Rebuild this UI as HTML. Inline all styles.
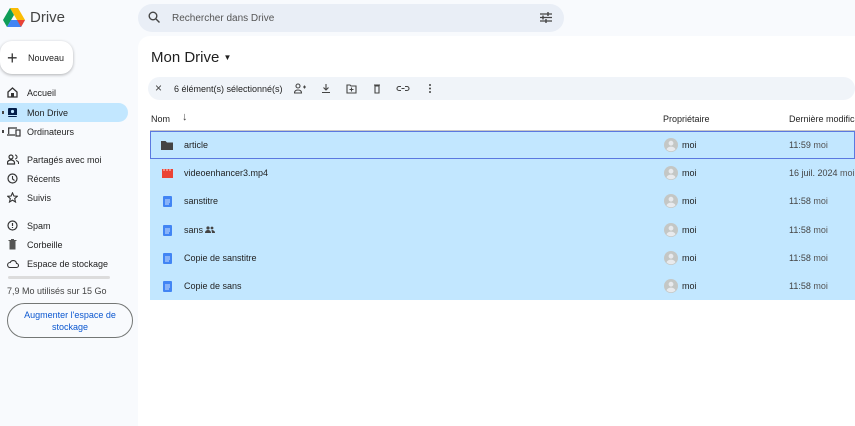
<!DOCTYPE html>
<html><head><meta charset="utf-8"><style>
*{box-sizing:border-box;margin:0;padding:0}
body{width:855px;height:426px;overflow:hidden;background:#f8fafd;font-family:"Liberation Sans",sans-serif;color:#1f1f1f;position:relative}
.a{position:absolute}
.t{font-size:9px;color:#1f1f1f;white-space:nowrap}
.nav{position:absolute;left:0;width:128px;height:19px;display:flex;align-items:center;font-size:9px}
.nav svg{position:absolute;left:7px}
.nav span{position:absolute;left:27px}
.row{position:absolute;left:150px;width:705px;height:29px;background:#c2e7ff;font-size:9px}
.row>span{position:absolute;top:9px}
.av{position:absolute;left:514px;top:7px;width:14px;height:14px}
.g{color:#555}
.d{color:#444}
</style></head><body>
<svg width="0" height="0" style="position:absolute"><defs><symbol id="av" viewBox="0 0 14 14"><circle cx="7" cy="7" r="7" fill="#c4c7c5"/><circle cx="7" cy="5.2" r="2.4" fill="#e8eaed"/><path d="M2.5 11.2c1-1.8 2.6-2.6 4.5-2.6s3.5.8 4.5 2.6A6 6 0 012.5 11.2z" fill="#e8eaed"/></symbol>
<symbol id="doc" viewBox="0 0 9 11"><rect width="9" height="11" rx="1" fill="#4285f4"/><path d="M2 4h5M2 6h5M2 8h4" stroke="#fff" stroke-width=".8"/></symbol></defs></svg>
<svg class="a" style="left:3px;top:8px" width="22" height="19" viewBox="0 0 22 19"><path d="M7 0h8l7 12h-8z" fill="#fbbc04"/><path d="M7 0l4 7-7 12-4-7z" fill="#0f9d58"/><path d="M4 19l4-7h14l-4 7z" fill="#4285f4"/><path d="M14 12h8l-4 7z" fill="#ea4335"/></svg>
<div class="a" style="left:30px;top:9px;font-size:15px;color:#444">Drive</div>
<div class="a" style="left:138px;top:4px;width:426px;height:28px;border-radius:14px;background:#e9eef6"></div>
<svg class="a" style="left:148px;top:11px" width="12" height="12" viewBox="0 0 12 12"><circle cx="5" cy="5" r="3.8" fill="none" stroke="#444" stroke-width="1.4"/><path d="M8 8l3.5 3.5" stroke="#444" stroke-width="1.4"/></svg>
<div class="a t" style="left:172px;top:13px;color:#555;font-size:10px">Rechercher dans Drive</div>
<svg class="a" style="left:540px;top:12px" width="12" height="11" viewBox="0 0 12 11"><path d="M0 2h12M0 5.5h12M0 9h12" stroke="#444" stroke-width="1.2"/><path d="M8 0v4M3 3.5v4M6 7v4" stroke="#444" stroke-width="1.4"/></svg>
<div class="a" style="left:0;top:41px;width:73px;height:33px;border-radius:12px;background:#fff;box-shadow:0 1px 3px rgba(0,0,0,.3)"></div>
<div class="a" style="left:7px;top:48px;font-size:18px;font-weight:300;color:#333">+</div>
<div class="a t" style="left:28px;top:53px">Nouveau</div>
<div class="nav" style="top:83px"><svg width="11" height="11" viewBox="0 0 11 11"><path d="M1 5L5.5 1 10 5v5H1z" fill="none" stroke="#333" stroke-width="1.3"/><rect x="4" y="6" width="3" height="4" fill="#333"/></svg><span>Accueil</span></div>
<div class="nav" style="top:103px;background:#c2e7ff;border-radius:0 10px 10px 0"><svg width="11" height="11" viewBox="0 0 11 11"><rect x="1" y="1" width="9" height="9" rx="1" fill="#041e49"/><circle cx="5.5" cy="4.5" r="1.6" fill="#c2e7ff"/><rect x="1" y="8" width="9" height="1" fill="#c2e7ff"/></svg><span>Mon Drive</span></div>
<div class="a" style="left:2px;top:111px;width:2px;height:3px;background:#444"></div>
<div class="nav" style="top:122px"><svg width="14" height="11" viewBox="0 0 14 11"><path d="M1 2h9M1.7 2v6M0 9h8" fill="none" stroke="#333" stroke-width="1.2"/><rect x="9" y="4" width="4" height="6" fill="none" stroke="#333" stroke-width="1.2"/></svg><span>Ordinateurs</span></div>
<div class="a" style="left:2px;top:130px;width:2px;height:3px;background:#444"></div>
<div class="nav" style="top:150px"><svg width="12" height="11" viewBox="0 0 12 11"><circle cx="4" cy="3" r="2" fill="none" stroke="#333" stroke-width="1.2"/><path d="M0.5 10v-1.5c0-1.5 2-2.5 3.5-2.5s3.5 1 3.5 2.5V10z" fill="none" stroke="#333" stroke-width="1.2"/><path d="M8 1a2 2 0 010 4M9 6.5c1.5.5 2.5 1 2.5 2v1.5" fill="none" stroke="#333" stroke-width="1.1"/></svg><span>Partagés avec moi</span></div>
<div class="nav" style="top:169px"><svg width="11" height="11" viewBox="0 0 11 11"><circle cx="5.5" cy="5.5" r="4.5" fill="none" stroke="#333" stroke-width="1.2"/><path d="M5.5 3v3l2 1.5" fill="none" stroke="#333" stroke-width="1.1"/></svg><span>Récents</span></div>
<div class="nav" style="top:188px"><svg width="11" height="11" viewBox="0 0 11 11"><path d="M5.5 .8l1.4 3.2 3.4.3-2.6 2.3.8 3.4-3-1.8-3 1.8.8-3.4L.7 4.3l3.4-.3z" fill="none" stroke="#333" stroke-width="1.1"/></svg><span>Suivis</span></div>
<div class="nav" style="top:216px"><svg width="11" height="11" viewBox="0 0 11 11"><circle cx="5.5" cy="5.5" r="4.5" fill="none" stroke="#333" stroke-width="1.2"/><path d="M5.5 3v3M5.5 7v1" stroke="#333" stroke-width="1.2"/></svg><span>Spam</span></div>
<div class="nav" style="top:235px"><svg width="11" height="11" viewBox="0 0 11 11"><rect x="2.5" y="2" width="6" height="8.5" fill="#555"/><path d="M1.5 1.5h8M4 .5h3" stroke="#555"/></svg><span>Corbeille</span></div>
<div class="nav" style="top:254px"><svg width="12" height="11" viewBox="0 0 12 11"><path d="M3 9.5h6.5a2 2 0 000-4 3.3 3.3 0 00-6.3-1A2.3 2.3 0 003 9.5z" fill="none" stroke="#333" stroke-width="1.1"/></svg><span>Espace de stockage</span></div>
<div class="a" style="left:8px;top:276px;width:102px;height:3px;border-radius:2px;background:#dcdcdc"></div>
<div class="a t" style="left:7px;top:286px;color:#444">7,9 Mo utilisés sur 15 Go</div>
<div class="a" style="left:7px;top:303px;width:126px;height:35px;border:1px solid #747775;border-radius:18px;text-align:center;font-size:9px;color:#0b57d0;line-height:12px;padding-top:5px">Augmenter l'espace de<br>stockage</div>
<div class="a" style="left:138px;top:36px;width:717px;height:390px;background:#fff;border-radius:12px 0 0 0"></div>
<div class="a" style="left:151px;top:49px;font-size:15px;color:#1f1f1f">Mon Drive <span style="font-size:8px;vertical-align:2px">▼</span></div>
<div class="a" style="left:148px;top:77px;width:707px;height:23px;border-radius:12px;background:#f0f4f9"></div>
<div class="a" style="left:155px;top:81px;font-size:12px;color:#444">×</div>
<div class="a t" style="left:174px;top:84px">6 élément(s) sélectionné(s)</div>
<svg class="a" style="left:294px;top:83px" width="140" height="11" viewBox="0 0 140 11">
<g fill="none" stroke="#444" stroke-width="1.1"><circle cx="4" cy="3" r="2"/><path d="M.5 10c0-2 1.5-3 3.5-3s3.5 1 3.5 3z"/><path d="M9 4h3M10.5 2.5v3"/>
<path d="M32 1v6M29.5 4.5L32 7l2.5-2.5M28 9.5h8"/>
<path d="M53 2h3l1 1h5v7h-9z M57.5 4.5v4M55.5 6.5h4"/>
<path d="M80 2h6M81 3h4v7h-4z"/>
<path d="M107 3.5h-2a2 2 0 000 4h2M111 3.5h2a2 2 0 010 4h-2M107.5 5.5h3"/></g>
<circle cx="136" cy="2" r="1" fill="#444"/><circle cx="136" cy="5.5" r="1" fill="#444"/><circle cx="136" cy="9" r="1" fill="#444"/></svg>
<div class="a t" style="left:151px;top:114px">Nom</div>
<div class="a" style="left:182px;top:111px;font-size:11px;color:#444">↓</div>
<div class="a t" style="left:663px;top:114px">Propriétaire</div>
<div class="a t" style="left:789px;top:114px">Dernière modification</div>
<div class="a" style="left:150px;top:130px;width:705px;height:1px;background:#c7c7c7"></div>

<div class="row" style="top:272px;height:28px"><svg class="a" style="left:13px;top:9px" width="9" height="11"><use href="#doc"/></svg><span style="left:34px">Copie de sans</span><svg class="av"><use href="#av"/></svg><span style="left:532px">moi</span><span class="d" style="left:639px">11:58 <span class="g">moi</span></span></div>
<div class="row" style="top:244px"><svg class="a" style="left:13px;top:9px" width="9" height="11"><use href="#doc"/></svg><span style="left:34px">Copie de sanstitre</span><svg class="av"><use href="#av"/></svg><span style="left:532px">moi</span><span class="d" style="left:639px">11:58 <span class="g">moi</span></span></div>
<div class="row" style="top:216px"><svg class="a" style="left:13px;top:9px" width="9" height="11"><use href="#doc"/></svg><span style="left:34px">sans</span><svg class="a" style="left:55px;top:10px" width="10" height="7" viewBox="0 0 10 7"><circle cx="3" cy="2" r="1.6" fill="#444"/><path d="M0 7c0-2 1.3-3 3-3s3 1 3 3z" fill="#444"/><circle cx="7" cy="2" r="1.4" fill="#444"/><path d="M6.5 4c1.5 0 3.5.6 3.5 3H7z" fill="#444"/></svg><svg class="av"><use href="#av"/></svg><span style="left:532px">moi</span><span class="d" style="left:639px">11:58 <span class="g">moi</span></span></div>
<div class="row" style="top:187px"><svg class="a" style="left:13px;top:9px" width="9" height="11"><use href="#doc"/></svg><span style="left:34px">sanstitre</span><svg class="av"><use href="#av"/></svg><span style="left:532px">moi</span><span class="d" style="left:639px">11:58 <span class="g">moi</span></span></div>
<div class="row" style="top:159px"><svg class="a" style="left:12px;top:9px" width="11" height="10"><rect y="1" width="11" height="9" fill="#ea4335"/><path d="M2 1v2M5 1v2M8 1v2" stroke="#fff" stroke-width=".8"/></svg><span style="left:34px">videoenhancer3.mp4</span><svg class="av"><use href="#av"/></svg><span style="left:532px">moi</span><span class="d" style="left:639px">16 juil. 2024 <span class="g">moi</span></span></div>
<div class="row" style="top:131px;height:28px;box-shadow:inset 0 0 0 1px #5b79e0"><svg class="a" style="left:11px;top:9px" width="12" height="10"><path d="M0 1h4.5l1.5 1.5h6V10H0z" fill="#444"/></svg><span style="left:34px">article</span><svg class="av"><use href="#av"/></svg><span style="left:532px">moi</span><span class="d" style="left:639px">11:59 <span class="g">moi</span></span></div>
</body></html>
